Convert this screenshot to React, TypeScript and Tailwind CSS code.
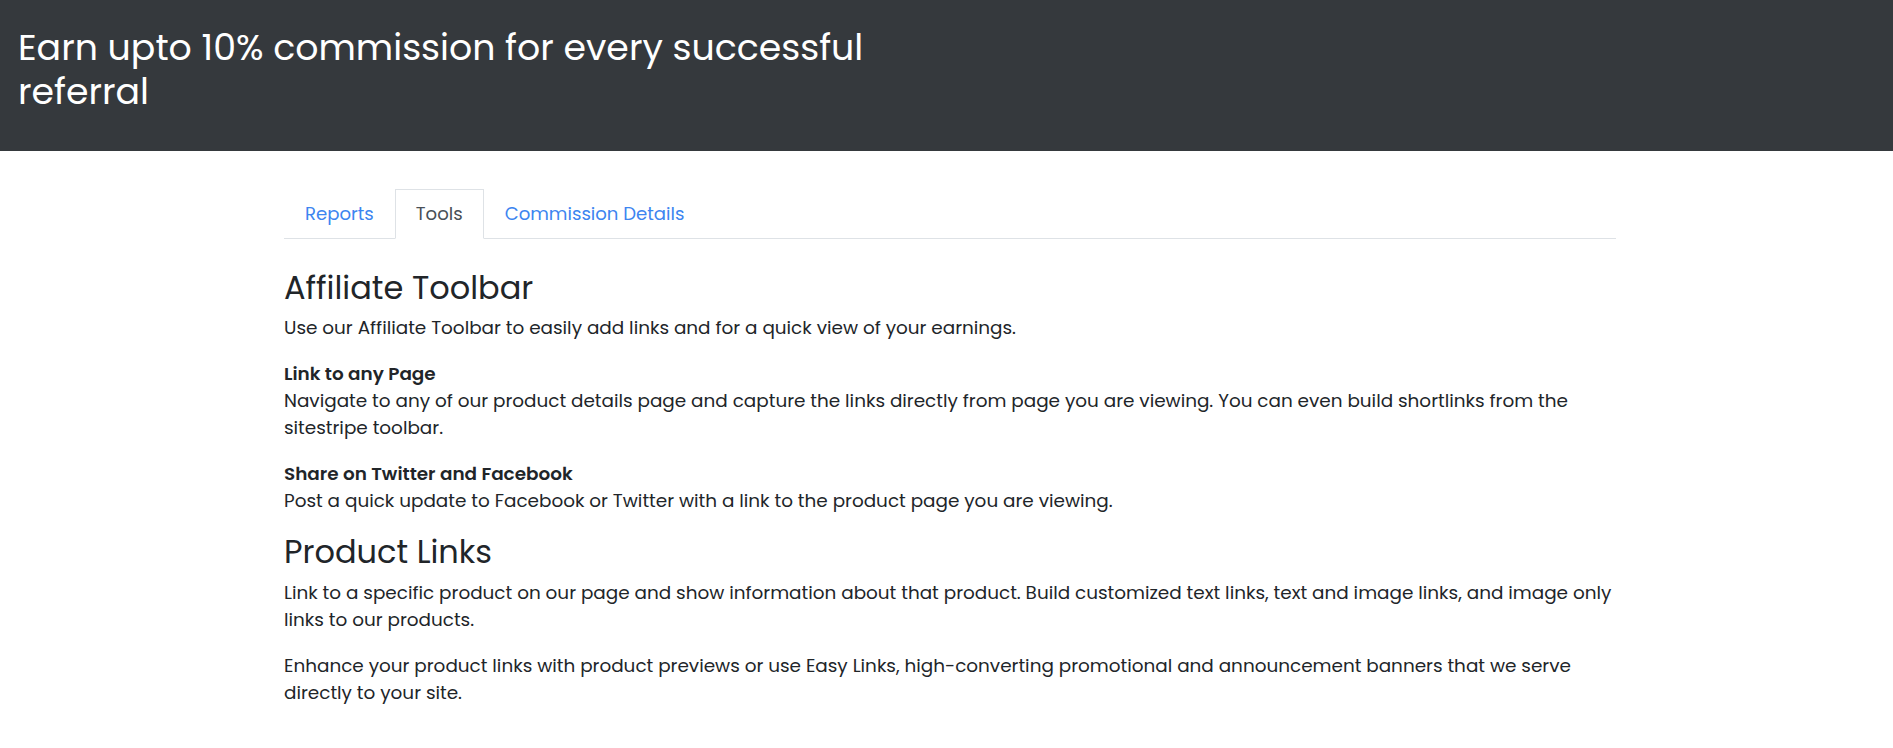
const font = { fontFamily: 'Poppins, "Open Sans", "Liberation Sans", sans-serif' };

function Tab({ label, active }: { label: string; active?: boolean }) {
  return (
    <li className="-mb-px">
      <a
        href="#"
        className={`block px-5 py-3 text-[18.1px] leading-6 ${
          active
            ? 'border border-[#dee2e6] border-b-white bg-white text-[#495057]'
            : 'border border-transparent text-[#3d85f0]'
        }`}
      >
        {label}
      </a>
    </li>
  );
}

export default function App() {
  return (
    <div className="min-h-screen bg-white text-[#212529]" style={font}>
      <header className="h-[151px] bg-[#35393d] pl-[18px] pt-[26px]">
        <h1 className="w-[880px] text-[36.3px] font-normal leading-[1.2] text-white">
          Earn upto 10% commission for every successful referral
        </h1>
      </header>

      <main className="ml-[284px] w-[1332px] pt-[38px]">
        <ul className="flex border-b border-[#dee2e6]">
          <Tab label="Reports" />
          <Tab label="Tools" active />
          <Tab label="Commission Details" />
        </ul>

        <section className="pt-[30px] text-[18.4px] leading-[27px]">
          <h2 className="mb-[7px] text-[32px] font-normal leading-[1.2]">Affiliate Toolbar</h2>
          <p className="mb-[19px]">
            Use our Affiliate Toolbar to easily add links and for a quick view of your earnings.
          </p>
          <p className="mb-[19px]">
            <strong className="font-semibold">Link to any Page</strong>
            <br />
            Navigate to any of our product details page and capture the links directly from page
            you are viewing. You can even build shortlinks from the sitestripe toolbar.
          </p>
          <p className="mb-[19px]">
            <strong className="font-semibold">Share on Twitter and Facebook</strong>
            <br />
            Post a quick update to Facebook or Twitter with a link to the product page you are
            viewing.
          </p>

          <h2 className="mb-[7px] text-[32px] font-normal leading-[1.2]">Product Links</h2>
          <p className="mb-[19px]">
            Link to a specific product on our page and show information about that product. Build
            customized text links, text and image links, and image only links to our products.
          </p>
          <p className="mb-[19px]">
            Enhance your product links with product previews or use Easy Links, high-converting
            promotional and announcement banners that we serve directly to your site.
          </p>
        </section>
      </main>
    </div>
  );
}
